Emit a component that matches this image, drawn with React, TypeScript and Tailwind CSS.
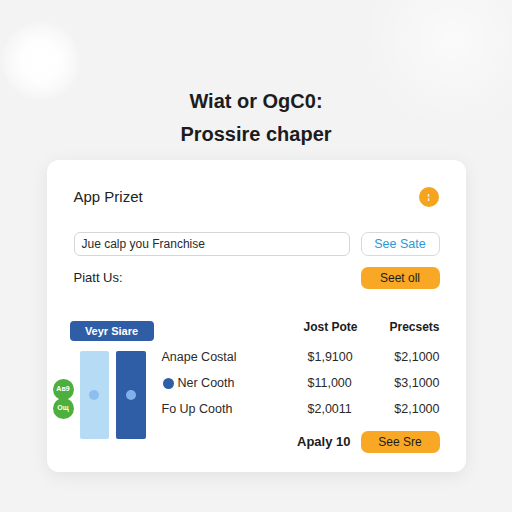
import React from "react";

const rows = [
  { label: "Anape Costal", a: "$1,9100", b: "$2,1000", dot: false },
  { label: "Ner Cooth", a: "$11,000", b: "$3,1000", dot: true },
  { label: "Fo Up Cooth", a: "$2,0011", b: "$2,1000", dot: false },
];

export default function App() {
  return (
    <div className="relative flex h-[512px] w-[512px] flex-col items-center overflow-hidden bg-[#f3f3f3] font-['Liberation_Sans',Arial,sans-serif] text-[#1c1c1c]">
      <div className="absolute left-[2px] top-[22px] h-[78px] w-[78px] rounded-full bg-[radial-gradient(circle,#ffffff_0%,#fefefe_35%,rgba(250,250,250,0.7)_60%,rgba(243,243,243,0)_75%)]" />
      <div className="absolute -right-[40px] -top-[40px] h-[160px] w-[200px] rounded-full bg-[radial-gradient(circle,rgba(255,255,255,0.6)_0%,rgba(243,243,243,0)_70%)]" />

      <div className="relative pt-[88px] text-center">
        <h1 className="text-[20px] font-bold leading-[26px]">Wiat or OgC0:</h1>
        <h2 className="mt-[7px] text-[20px] font-bold leading-[26px]">Prossire chaper</h2>
      </div>

      <div className="relative mt-[13px] w-[419px] rounded-[12px] bg-white px-[26px] pb-[19px] pl-[27px] pt-[27px] shadow-[0_4px_18px_rgba(0,0,0,0.07)]">
        <div className="flex h-[20px] items-center justify-between">
          <span className="text-[15px] leading-[20px] text-[#222]">App Prizet</span>
          <span className="mr-[1px] flex h-[20px] w-[20px] items-center justify-center rounded-full bg-[#f6a31e] text-[8px] font-bold leading-none text-white">
            ¦
          </span>
        </div>

        <div className="mt-[25px] flex h-[24px] gap-[11px]">
          <div className="flex flex-1 items-center rounded-[6px] border border-[#d6d6d6] px-[7px] text-[12px] text-[#2a2a2a]">
            Jue calp you Franchise
          </div>
          <button className="w-[79px] rounded-[7px] border border-[#d9d9d9] bg-white text-[12.5px] text-[#2b9ad4]">
            See Sate
          </button>
        </div>

        <div className="mt-[11px] flex h-[22px] items-center justify-between">
          <span className="text-[13px] text-[#1c1c1c]">Piatt Us:</span>
          <button className="h-[22px] w-[79px] rounded-[7px] bg-[#f8a824] text-[12px] text-[#1c1c1c]">
            Seet oll
          </button>
        </div>

        <div className="mt-[28px] flex">
          <div className="relative -ml-[4px] w-[92px]">
            <div className="mt-[4px] flex h-[20px] w-[84px] items-center justify-center rounded-[4px] bg-[#2f5da6] text-[11px] font-bold text-white">
              Veyr Siare
            </div>
            <div className="ml-[10px] mt-[10px] flex gap-[7px]">
              <div className="flex h-[88px] w-[29px] items-center justify-center rounded-[2px] bg-[#b5dbf5]">
                <span className="h-[10px] w-[10px] rounded-full bg-[#8dbef0]" />
              </div>
              <div className="flex h-[88px] w-[30px] items-center justify-center rounded-[2px] bg-[#2f5da6]">
                <span className="h-[10px] w-[10px] rounded-full bg-[#7fb2ea]" />
              </div>
            </div>
            <div className="absolute left-[-17px] top-[62px] flex flex-col">
              <span className="flex h-[21px] w-[21px] items-center justify-center rounded-full bg-[#4caf3e] text-[7px] font-bold text-white">
                Ав9
              </span>
              <span className="-mt-[2px] flex h-[21px] w-[21px] items-center justify-center rounded-full bg-[#4caf3e] text-[7px] font-bold text-white">
                Ощ
              </span>
            </div>
          </div>

          <div className="flex-1">
            <div className="grid h-[20px] grid-cols-[142px_1fr_1fr] items-center text-[12px] font-bold">
              <span />
              <span>Jost Pote</span>
              <span className="text-right">Precsets</span>
            </div>
            <div className="mt-[7px]">
              {rows.map((r) => (
                <div key={r.label} className="grid h-[26px] grid-cols-[146px_1fr_1fr] items-center text-[12.5px] text-[#2a2a2a]">
                  <span className="flex items-center gap-[4px]">
                    {r.dot && <span className="ml-[1px] h-[11px] w-[11px] rounded-full bg-[#2f5da6]" />}
                    {r.label}
                  </span>
                  <span>{r.a}</span>
                  <span className="text-right">{r.b}</span>
                </div>
              ))}
            </div>
            <div className="mt-[9px] flex h-[22px] items-center justify-end gap-[10px]">
              <span className="text-[13px] font-bold">Apaly 10</span>
              <button className="h-[22px] w-[79px] rounded-[7px] bg-[#f8a824] text-[12px] text-[#1c1c1c]">
                See Sre
              </button>
            </div>
          </div>
        </div>
      </div>
    </div>
  );
}
